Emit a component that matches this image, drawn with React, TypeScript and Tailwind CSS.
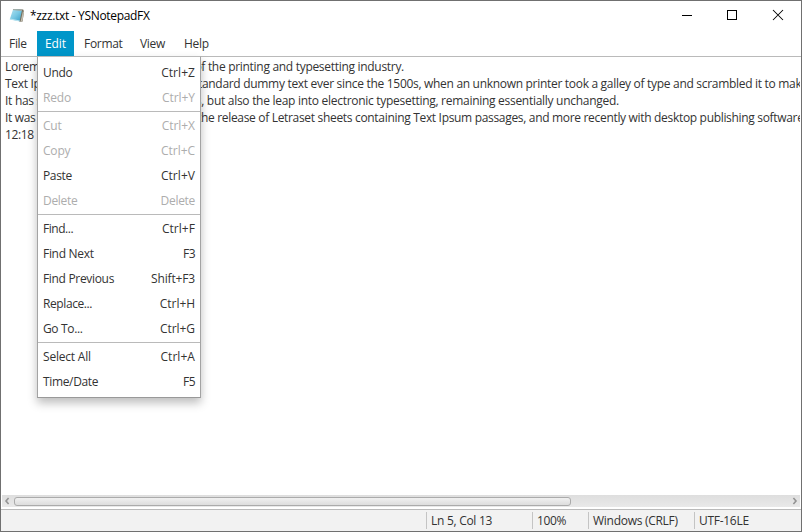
import React from "react";

type Item = { label: string; keys: string; off?: boolean; ls?: string; ks?: string };

const groups: Item[][] = [
  [
    { label: "Undo", keys: "Ctrl+Z", ls: "tracking-[-0.35px]", ks: "tracking-[0.05px]" },
    { label: "Redo", keys: "Ctrl+Y", off: true, ks: "tracking-[-0.05px]" },
  ],
  [
    { label: "Cut", keys: "Ctrl+X", off: true, ks: "tracking-[-0.05px]" },
    { label: "Copy", keys: "Ctrl+C", off: true, ks: "tracking-[-0.05px]" },
    { label: "Paste", keys: "Ctrl+V", ls: "tracking-[-0.35px]", ks: "tracking-[0.05px]" },
    { label: "Delete", keys: "Delete", off: true, ls: "tracking-[-0.3px]", ks: "tracking-[-0.3px]" },
  ],
  [
    { label: "Find...", keys: "Ctrl+F", ls: "tracking-[-0.45px]", ks: "tracking-[0.05px]" },
    { label: "Find Next", keys: "F3", ls: "tracking-[-0.3px]", ks: "tracking-[-0.5px]" },
    { label: "Find Previous", keys: "Shift+F3", ls: "tracking-[-0.32px]", ks: "tracking-[-0.15px]" },
    { label: "Replace...", keys: "Ctrl+H", ls: "tracking-[-0.4px]", ks: "tracking-[-0.05px]" },
    { label: "Go To...", keys: "Ctrl+G", ls: "tracking-[-0.35px]", ks: "tracking-[-0.05px]" },
  ],
  [
    { label: "Select All", keys: "Ctrl+A", ks: "tracking-[0.05px]" },
    { label: "Time/Date", keys: "F5", ls: "tracking-[-0.35px]", ks: "tracking-[-0.5px]" },
  ],
];

const lines = [
  { text: "Lorem Ipsum is simply dummy text of the printing and typesetting industry.", cls: "tracking-[-0.3px]" },
  { text: "Text Ipsum has been the industry's standard dummy text ever since the 1500s, when an unknown printer took a galley of type and scrambled it to make a type specimen book.", cls: "tracking-[-0.303px]" },
  { text: "It has survived not only five centuries, but also the leap into electronic typesetting, remaining essentially unchanged.", cls: "tracking-[-0.285px]" },
  { text: "It was popularised in the 1960s with the release of Letraset sheets containing Text Ipsum passages, and more recently with desktop publishing software like Aldus PageMaker.", cls: "tracking-[-0.318px]" },
  { text: "12:18", cls: "tracking-[-0.4px]" },
];

function NotepadIcon() {
  return (
    <svg width="16" height="16" viewBox="0 0 16 16">
      <defs>
        <linearGradient id="pad" x1="0" y1="0" x2="1" y2="1">
          <stop offset="0" stopColor="#b5e2ef" />
          <stop offset="0.5" stopColor="#7ac9e4" />
          <stop offset="1" stopColor="#359cc6" />
        </linearGradient>
      </defs>
      <path d="M4.5 1 L14.2 1.6 L15 3.6 L13.6 13.4 L10.5 13.8 Z" fill="#75705f" />
      <path d="M13.9 3.2 L15 3.8 L13.4 13.2 L11.6 13.5 Z" fill="#c4bfb2" />
      <path d="M4.2 1 L13 2 L10.6 13.3 L0.8 11.2 Z" fill="url(#pad)" />
      <path d="M4.2 1 L13 2 L12.8 3.1 L3.9 2.1 Z" fill="#a3a79f" />
      <path d="M1 10.5 L10.8 12.6 L10.5 13.6 L0.7 11.5 Z" fill="#b9e4f1" />
    </svg>
  );
}

function EditMenu() {
  return (
    <div className="absolute left-[36px] top-[55px] flex h-[342px] w-[164px] flex-col border border-[#a3a3a3] border-t-[#bababa] border-b-[#999999] bg-white pt-[3px] shadow-[0_5px_9px_rgba(0,0,0,0.26)]">
      {groups.map((g, i) => (
        <React.Fragment key={i}>
          {i > 0 && <div className="my-px h-px shrink-0 bg-[#bababa]" />}
          {g.map((it) => (
            <div
              key={it.label}
              className={
                "flex h-[25px] shrink-0 items-center justify-between px-[5px] " +
                (it.off ? "text-[#adadad]" : "text-[#333333]")
              }
            >
              <span className={it.ls ?? "tracking-[-0.2px]"}>{it.label}</span>
              <span className={it.ks ?? "tracking-[-0.2px]"}>{it.keys}</span>
            </div>
          ))}
        </React.Fragment>
      ))}
    </div>
  );
}

export default function App() {
  return (
    <div className="relative flex h-[532px] w-[802px] flex-col overflow-hidden whitespace-nowrap border border-[#707070] bg-white font-['Open_Sans',sans-serif] text-[12px] leading-[17px] text-[#333333]">
      <header className="flex h-[30px] shrink-0 items-center text-black">
        <span className="ml-[8px]"><NotepadIcon /></span>
        <span className="-mt-px ml-[5px] tracking-[-0.32px]">*zzz.txt - YSNotepadFX</span>
        <svg className="ml-auto" width="138" height="30" viewBox="663 1 138 30" shapeRendering="crispEdges">
          <path d="M682 15.5 H692" stroke="#000" fill="none" />
          <rect x="727.5" y="10.5" width="9" height="9" stroke="#000" fill="none" />
          <path d="M773 10 L783 20 M783 10 L773 20" stroke="#000" strokeWidth="1.05" fill="none" shapeRendering="auto" />
        </svg>
      </header>
      <nav className="flex h-[25px] shrink-0 items-center tracking-[-0.3px]">
        <span className="w-[36px] pl-[8px]">File</span>
        <span className="flex h-[25px] w-[37px] items-center bg-[#0096c9] pl-[8px] tracking-[-0.1px] text-white">Edit</span>
        <span className="w-[56px] pl-[10px]">Format</span>
        <span className="w-[44px] pl-[10px]">View</span>
        <span className="pl-[10px]">Help</span>
      </nav>
      <main className="h-[439px] shrink-0 border-t border-[#bababa]">
        <div className="mr-px h-full overflow-hidden pl-[4px] pt-px">
          {lines.map((l) => (
            <div key={l.text} className={l.cls}>{l.text}</div>
          ))}
        </div>
      </main>
      <div className="mx-px flex h-[12px] shrink-0 items-start bg-gradient-to-b from-[#dedede] to-[#e9e9e9]">
        <svg width="12" height="12" viewBox="0 0 12 12"><path d="M6.6 3 L4 6 L6.6 9" stroke="#939393" strokeWidth="1.6" fill="none" /></svg>
        <div className="mt-[2px] h-[9px] w-[557px] rounded-[3px] border border-[#ababab] bg-gradient-to-b from-[#f0f0f0] to-[#dddddd]" />
        <svg className="ml-auto" width="10" height="12" viewBox="0 0 10 12"><path d="M3.4 3 L6 6 L3.4 9" stroke="#939393" strokeWidth="1.6" fill="none" /></svg>
      </div>
      <footer className="mt-[2px] flex flex-1 items-center border-t border-[#bababa] bg-[#f2f2f2] tracking-[-0.28px]">
        <span className="ml-[425px] h-[17px] w-[106px] border-l border-[#c4c4c4] pl-[4px]">Ln 5, Col 13</span>
        <span className="h-[17px] w-[56px] border-l border-[#c4c4c4] pl-[4px] tracking-[-0.4px]">100%</span>
        <span className="h-[17px] w-[106px] border-l border-[#c4c4c4] pl-[4px]">Windows (CRLF)</span>
        <span className="h-[17px] border-l border-[#c4c4c4] pl-[4px]">UTF-16LE</span>
      </footer>
      <EditMenu />
    </div>
  );
}
